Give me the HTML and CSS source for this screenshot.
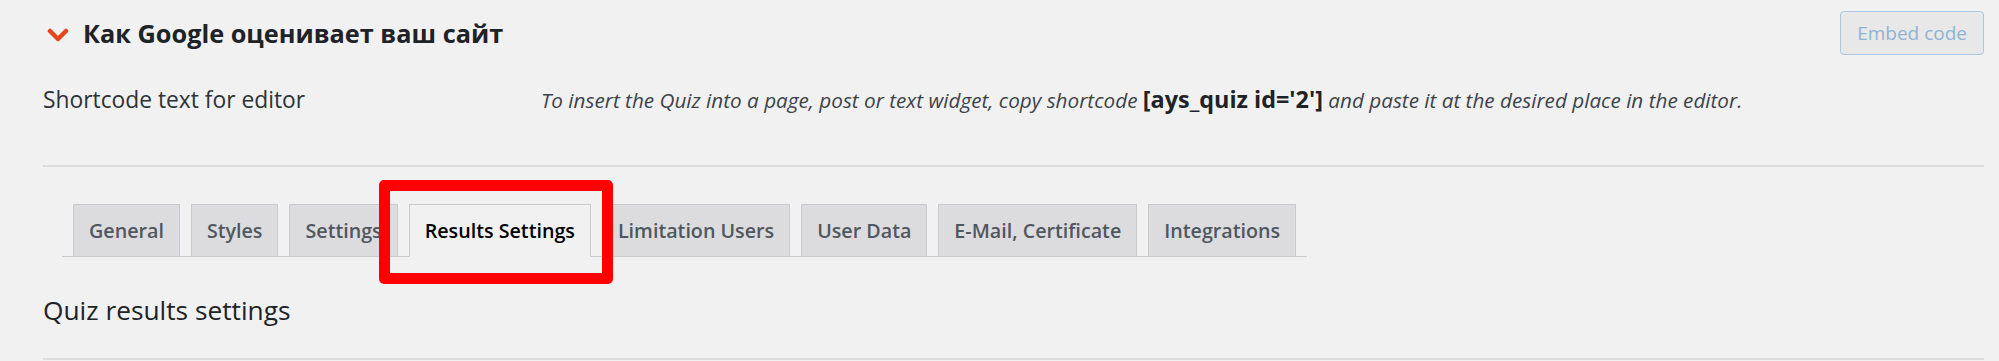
FILE: index.html
```html
<!DOCTYPE html>
<html lang="ru">
<head>
<meta charset="utf-8">
<title>Quiz</title>
<link rel="stylesheet" href="styles.css">
</head>
<body>
<div class="page">
  <header class="head">
    <div class="title-wrap">
      <svg class="chev" viewBox="0 0 22 14" width="22" height="14" aria-hidden="true">
        <polyline points="3,3 11,11 19,3" fill="none" stroke="#e5461e" stroke-width="4.5" stroke-linecap="round" stroke-linejoin="round"/>
      </svg>
      <h1 class="title">Как Google оценивает ваш сайт</h1>
    </div>
    <button class="embed" type="button">Embed code</button>
  </header>

  <div class="sc-row">
    <span class="sc-label">Shortcode text for editor</span>
    <p class="sc-desc">To insert the Quiz into a page, post or text widget, copy shortcode <strong class="sc-code">[ays_quiz id='2']</strong> and paste it at the desired place in the editor.</p>
  </div>

  <hr class="sep">

  <div class="tabs-area">
    <nav class="tabs">
      <a class="tab">General</a>
      <a class="tab">Styles</a>
      <a class="tab">Settings</a>
      <a class="tab tab-active">Results Settings</a>
      <a class="tab">Limitation Users</a>
      <a class="tab">User Data</a>
      <a class="tab">E-Mail, Certificate</a>
      <a class="tab">Integrations</a>
    </nav>
    <span class="highlight"></span>
  </div>

  <h2 class="section-title">Quiz results settings</h2>

  <hr class="sep">
</div>
</body>
</html>
```

FILE: styles.css
```css
* { box-sizing: border-box; }

html, body {
  margin: 0;
  padding: 0;
  background: #f1f1f1;
}

body {
  font-family: "Open Sans", "Noto Sans", "Liberation Sans", sans-serif;
  color: #1d2327;
}

.page {
  padding: 0 15px 0 43px;
}

.head {
  display: flex;
  align-items: center;
  justify-content: space-between;
  padding-top: 11px;
  height: 55px;
}

.title-wrap {
  display: flex;
  align-items: center;
  padding-left: 4px;
  gap: 14px;
}

.chev {
  display: block;
  margin-top: 4px;
}

.title {
  margin: 0;
  font-size: 25.3px;
  font-weight: 700;
  line-height: 34px;
  color: #1d2327;
}

.embed {
  font-family: inherit;
  font-size: 19px;
  line-height: 26px;
  height: 44px;
  padding: 0 16px;
  color: #8fb3d5;
  background: #e8e8e8;
  border: 1px solid #a9c7e2;
  border-radius: 4px;
}

.sc-row {
  display: flex;
  align-items: baseline;
  margin-top: 29px;
  line-height: 30px;
}

.sc-label {
  width: 498px;
  flex: none;
  font-size: 22.8px;
  color: #2c3338;
}

.sc-desc {
  margin: 0;
  font-size: 20.7px;
  font-style: italic;
  color: #3c434a;
  white-space: nowrap;
}

.sc-code {
  font-style: normal;
  font-weight: 700;
  font-size: 23.4px;
  color: #1d2327;
}

.sep {
  margin: 50px 0 0;
  height: 2px;
  border: 0;
  background: #dcdcdc;
}

.tabs-area {
  position: relative;
  margin-top: 37px;
  margin-left: 19px;
}

.tabs {
  display: inline-flex;
  align-items: flex-end;
  gap: 11px;
  padding: 0 11px;
  border-bottom: 1px solid #c9cacc;
}

.tab {
  display: block;
  height: 53px;
  margin-bottom: -1px;
  padding: 0 15px;
  line-height: 51px;
  font-size: 19.7px;
  font-weight: 600;
  color: #50575e;
  background: #dcdcde;
  border: 1px solid #c9cacc;
  white-space: nowrap;
}

.tab-active {
  color: #000;
  background: #f1f1f1;
  border-bottom-color: #f1f1f1;
}

.highlight {
  position: absolute;
  left: 317px;
  top: -24px;
  width: 234px;
  height: 104px;
  border: 11px solid #ff0000;
  border-radius: 5px;
  pointer-events: none;
}

.section-title {
  margin: 36px 0 0;
  font-size: 26.3px;
  font-weight: 400;
  line-height: 34px;
  color: #1d2327;
}

.section-title + .sep {
  margin-top: 31px;
}
```
